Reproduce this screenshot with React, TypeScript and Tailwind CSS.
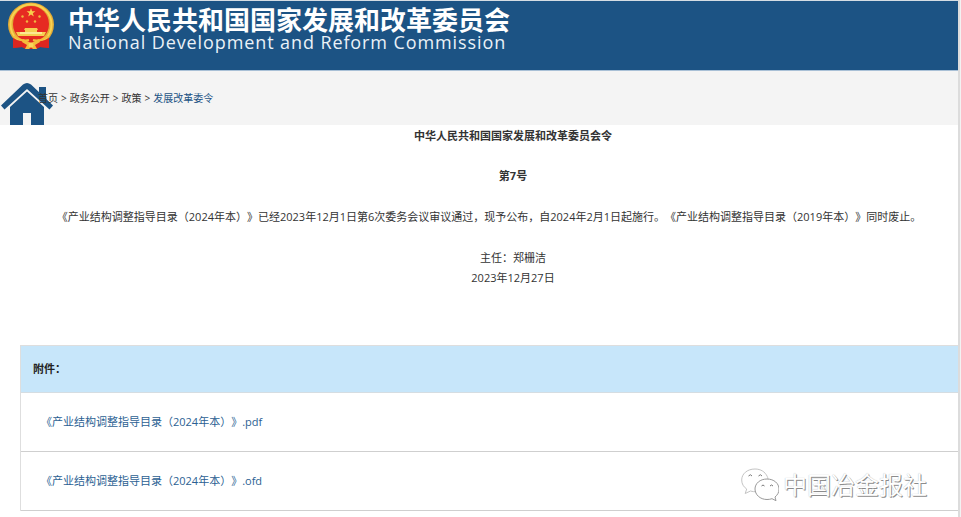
import React from "react";

const attachments = ["《产业结构调整指导目录（2024年本）》.pdf", "《产业结构调整指导目录（2024年本）》.ofd"];

function Emblem() {
  return (
    <svg viewBox="0 0 46 48" className="h-12 w-[46px] shrink-0" aria-hidden="true">
      <path d="M6 32 L5 46 L14 45 L18 47 H28 L32 45 L41 46 L40 32Z" fill="#d9231f" />
      <ellipse cx="23" cy="22.500" rx="23" ry="22" fill="#e3ab35" />
      <ellipse cx="23" cy="22.500" rx="20.500" ry="20" fill="none" stroke="#f8d252" strokeWidth="2" />
      <ellipse cx="23" cy="22" rx="18" ry="18" fill="#e62a22" />
      <path d="M23 6l1.100 3.200h3.300l-2.600 2 1 3.200-2.800-1.900-2.800 1.900 1-3.200-2.600-2h3.300z" fill="#f8cf4c" />
      <g fill="#f0b840">
        <circle cx="14.500" cy="14.500" r="1.200" />
        <circle cx="31.500" cy="14.500" r="1.200" />
        <circle cx="19" cy="19.500" r="1.200" />
        <circle cx="27" cy="19.500" r="1.200" />
      </g>
      <path d="M17 26h12l1 2h-1v2h9l-2 4H10l-2-4h9v-2h-1z" fill="#f6cf52" />
      <path d="M12 31h22" stroke="#fff0a8" strokeWidth="1.500" />
      <path d="M5 36q8 5 13 2l5-2 5 2q5 3 13-2v10l-9-1-4 2H18l-4-2-9 1z" fill="#dc2620" />
      <path d="M15 37l8 4 8-4 1 3-5 3 2 4h-4l-2-2-2 2h-4l2-4-5-3z" fill="#f3bd3c" />
      <circle cx="23" cy="43" r="2.500" fill="#f9d75c" />
      <path d="M6 34q8 6 15 4M40 34q-8 6-15 4" fill="none" stroke="#f3bd3c" strokeWidth="2" />
    </svg>
  );
}

function House() {
  return (
    <svg viewBox="0 0 52 42" className="absolute bottom-0 left-px h-[42px] w-[52px]" aria-hidden="true">
      <path d="M38 4h7v14l-7-6z" fill="#1c5384" />
      <path d="M0 22.500L22 1.500Q26-1.500 30 1.500L52 22.500 48.500 26.500 26 6 3.500 26.500z" fill="#1c5384" />
      <path d="M9 42V24L26 8.500 43 24V42H30V30h-8v12z" fill="#1c5384" />
    </svg>
  );
}

function Watermark() {
  return (
    <div className="absolute right-[34px] bottom-[15px] flex items-center gap-1">
      <svg viewBox="0 0 38 34" className="h-[34px] w-[38px]" fill="#fff" stroke="#999" strokeWidth="1" aria-hidden="true">
        <path d="M14 1C6 1 .700 6 .700 12c0 4 2 7 5 9l-1.500 4.500L9.500 23c2 .600 4 .900 7 .500C28 22 28 11 26 8 24 4 20 1 14 1z" stroke="#c4c4c4" />
        <path d="M26 11c-7 0-12 4.500-12 10s5 10.500 12 10.500c2 0 3.500-.300 5-.800l4 2-1-3.700c2.500-2 4-4.500 4-8 0-5.500-5-10-12-10z" />
        <path d="M7.500 8q2-2.500 3.500 0M17.500 8q2-2.500 3.500 0M20.500 18q1.500-2 3 0M29 18q1.500-2 3 0" fill="none" stroke="#777" />
      </svg>
      <span className="text-2xl leading-8 text-white [text-shadow:1px_1px_0_#8c8c8c,0_0_1px_#b0b0b0]">中国冶金报社</span>
    </div>
  );
}

export default function App() {
  return (
    <div className="relative flex min-h-screen bg-[#f2f2f2] pr-px font-['Open_Sans','Noto_Sans_CJK_SC',sans-serif] text-[#333] [text-spacing-trim:space-all]">
      <div className="min-w-0 flex-1 border-r-2 border-[#dcdcdc] bg-white">
        <header className="flex h-[71px] items-start gap-[14px] border-t border-b border-t-[#d5dde4] border-b-[#a9c0d6] bg-[#1c5384] pt-px pl-2 text-white">
          <Emblem />
          <div className="pt-1.5">
            <h1 className="text-[26px] leading-6 font-bold whitespace-nowrap">中华人民共和国国家发展和改革委员会</h1>
            <p className="text-lg leading-5 tracking-wider whitespace-nowrap text-[#eaf1f7]">National Development and Reform Commission</p>
          </div>
        </header>

        <nav aria-label="位置" className="relative h-[54px] bg-[#f4f4f4] pt-[17px] pl-[38px] text-[10px] leading-5">
          <House />
          <ol className="relative flex gap-[3px]">
            <li><a href="#home">首页</a></li>
            <li aria-hidden="true">&gt;</li>
            <li><a href="#open">政务公开</a></li>
            <li aria-hidden="true">&gt;</li>
            <li><a href="#policy">政策</a></li>
            <li aria-hidden="true">&gt;</li>
            <li><a href="#orders" className="text-[#1c5384]">发展改革委令</a></li>
          </ol>
        </nav>

        <article className="pt-px text-center text-[11px] leading-5">
          <h2 className="pl-[68px] font-bold">中华人民共和国国家发展和改革委员会令</h2>
          <p className="mt-5 pl-[68px] font-bold">第7号</p>
          <p className="mt-[21px] pl-5 whitespace-nowrap">
            《产业结构调整指导目录（2024年本）》已经2023年12月1日第6次委务会议审议通过，现予公布，自2024年2月1日起施行。《产业结构调整指导目录（2019年本）》同时废止。
          </p>
          <p className="mt-[21px] pl-[68px]">主任：郑栅洁</p>
          <p className="pl-[68px]">2023年12月27日</p>
        </article>

        <section className="mt-[57px] ml-5 border-t border-l border-[#dedede] text-[11px]">
          <h3 className="border-b border-[#d5dde2] bg-[#c7e6fa] pl-3 leading-[46px] font-bold text-[#222]">附件：</h3>
          <ul>
            {attachments.map((name) => (
              <li key={name} className="border-b border-[#cfcfcf] pl-5 leading-[58px]">
                <a href="#file" className="text-[#2c5f93]">{name}</a>
              </li>
            ))}
          </ul>
        </section>
      </div>
      <Watermark />
    </div>
  );
}
